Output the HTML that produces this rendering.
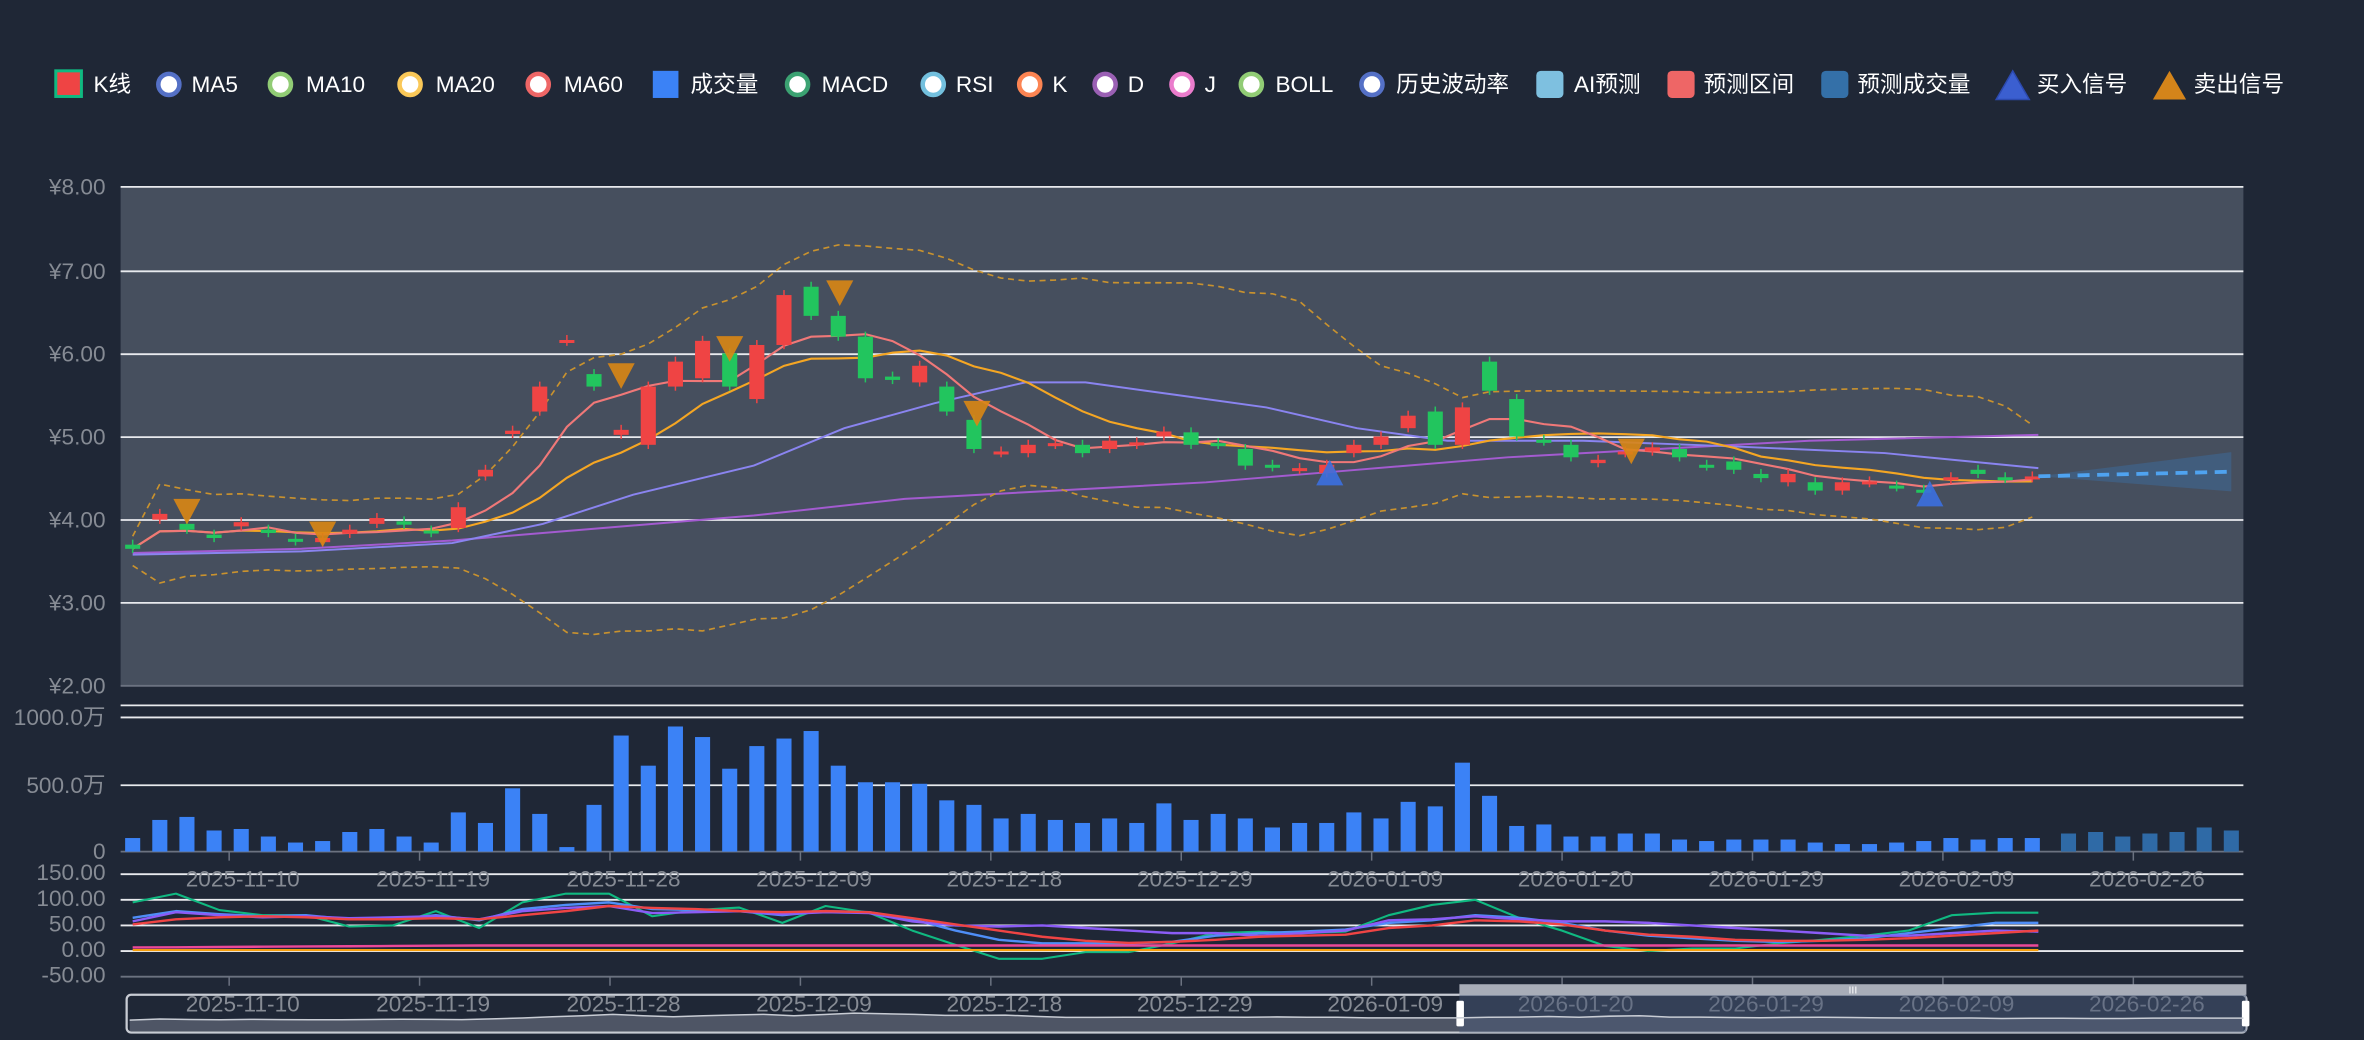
<!DOCTYPE html>
<html><head><meta charset="utf-8"><style>
html,body{margin:0;padding:0;background:#1f2736;}
svg{display:block;font-family:"Liberation Sans","Noto Sans CJK SC",sans-serif;}
</style></head><body>
<svg id="s" width="2364" height="1040" viewBox="0 0 1568 690" preserveAspectRatio="none" xmlns="http://www.w3.org/2000/svg">
<rect width="1568" height="690" fill="#1f2736"/>
<g font-size="15" fill="#ffffff">
<rect x="37" y="47" width="17" height="17" fill="#ef4444" stroke="#10b981" stroke-width="2"/><text x="62" y="61">K线</text>
<circle cx="112" cy="56" r="7" fill="#fff" stroke="#5470c6" stroke-width="3"/><text x="127" y="61">MA5</text>
<circle cx="186" cy="56" r="7" fill="#fff" stroke="#91cc75" stroke-width="3"/><text x="203" y="61">MA10</text>
<circle cx="272" cy="56" r="7" fill="#fff" stroke="#fac858" stroke-width="3"/><text x="289" y="61">MA20</text>
<circle cx="357" cy="56" r="7" fill="#fff" stroke="#ee6666" stroke-width="3"/><text x="374" y="61">MA60</text>
<rect x="433" y="47" width="17" height="18" fill="#3b82f6"/><text x="458" y="61">成交量</text>
<circle cx="529" cy="56" r="7" fill="#fff" stroke="#3ba272" stroke-width="3"/><text x="545" y="61">MACD</text>
<circle cx="619" cy="56" r="7" fill="#fff" stroke="#73c0de" stroke-width="3"/><text x="634" y="61">RSI</text>
<circle cx="683" cy="56" r="7" fill="#fff" stroke="#fc8452" stroke-width="3"/><text x="698" y="61">K</text>
<circle cx="733" cy="56" r="7" fill="#fff" stroke="#9a60b4" stroke-width="3"/><text x="748" y="61">D</text>
<circle cx="784" cy="56" r="7" fill="#fff" stroke="#ea7ccc" stroke-width="3"/><text x="799" y="61">J</text>
<circle cx="830" cy="56" r="7" fill="#fff" stroke="#91cc75" stroke-width="3"/><text x="846" y="61">BOLL</text>
<circle cx="910" cy="56" r="7" fill="#fff" stroke="#5470c6" stroke-width="3"/><text x="926" y="61">历史波动率</text>
<rect x="1019" y="47" width="18" height="18" rx="3" fill="#7ec0e0"/><text x="1044" y="61">AI预测</text>
<rect x="1106" y="47" width="18" height="18" rx="3" fill="#ee6666"/><text x="1130" y="61">预测区间</text>
<rect x="1208" y="47" width="18" height="18" rx="3" fill="#3470a8"/><text x="1232" y="61">预测成交量</text>
<polygon points="1335,47 1346,66 1324,66" fill="#3b5fd0" stroke="#2c4ab0"/><text x="1351" y="61">买入信号</text>
<polygon points="1439,47 1450,66 1428,66" fill="#d4841a"/><text x="1455" y="61">卖出信号</text>
</g>
<rect x="80" y="124" width="1408" height="331" fill="#464f5e"/>
<g stroke="#e8eaee" stroke-width="1.2">
<line x1="80" x2="1488" y1="124" y2="124"/><line x1="80" x2="1488" y1="180" y2="180"/><line x1="80" x2="1488" y1="235" y2="235"/><line x1="80" x2="1488" y1="290" y2="290"/><line x1="80" x2="1488" y1="345" y2="345"/><line x1="80" x2="1488" y1="400" y2="400"/>
<line x1="80" x2="1488" y1="468" y2="468"/><line x1="80" x2="1488" y1="476" y2="476"/><line x1="80" x2="1488" y1="521" y2="521"/>
<line x1="80" x2="1488" y1="580" y2="580"/><line x1="80" x2="1488" y1="597" y2="597"/><line x1="80" x2="1488" y1="614" y2="614"/><line x1="80" x2="1488" y1="631" y2="631"/>
</g>
<g stroke="#6b7280" stroke-width="1.2"><line x1="80" x2="1488" y1="455" y2="455"/><line x1="80" x2="1488" y1="565" y2="565"/><line x1="80" x2="1488" y1="648" y2="648"/></g>
<g font-size="15" fill="#868b94" text-anchor="end">
<text x="70" y="129">¥8.00</text><text x="70" y="185">¥7.00</text><text x="70" y="240">¥6.00</text><text x="70" y="295">¥5.00</text><text x="70" y="350">¥4.00</text><text x="70" y="405">¥3.00</text><text x="70" y="460">¥2.00</text>
<text x="70" y="481">1000.0万</text><text x="70" y="526">500.0万</text><text x="70" y="570">0</text>
<text x="70" y="584">150.00</text><text x="70" y="601">100.00</text><text x="70" y="618">50.00</text><text x="70" y="635">0.00</text><text x="70" y="652">-50.00</text>
</g>
<g id="ticks" stroke="#6b7280"></g>
<g id="xl" font-size="15" fill="#868b94" text-anchor="middle"></g>
<g id="vol"></g><g id="lines"></g><g id="cand"></g><g id="ind"></g>
<polygon points="1352,316 1480,300 1480,326" fill="#3b6ea5" opacity="0.45"/>
<line x1="1352" y1="316" x2="1478" y2="313" stroke="#4fa3f0" stroke-width="2.5" stroke-dasharray="8,5"/>
<polygon id="dzf" fill="#5a6272" opacity="0.8"/>
<rect x="84" y="660" width="1406" height="25" rx="3" fill="none" stroke="#c8ccd4" stroke-width="1.5"/>
<rect x="968" y="660" width="522" height="25" fill="#4a5a78" opacity="0.5"/>
<rect x="968" y="653" width="522" height="7" fill="#a8adb8"/>
<text x="1229" y="659" font-size="7" fill="#fff" text-anchor="middle">III</text>
<rect x="966" y="664" width="5" height="17" rx="1" fill="#fff"/><rect x="1487" y="664" width="5" height="17" rx="1" fill="#fff"/>
<polyline id="dz" fill="none" stroke="#c8ccd4" stroke-width="1"/>
</svg>
<script>
var NS="http://www.w3.org/2000/svg";
function el(p,t,a){var e=document.createElementNS(NS,t);for(var k in a)e.setAttribute(k,a[k]);document.getElementById(p).appendChild(e);return e;}
var oc=[[3.7,3.65],[4.0,4.07],[3.95,3.88],[3.82,3.78],[3.92,3.97],[3.88,3.84],[3.77,3.74],[3.73,3.78],[3.83,3.88],[3.95,4.02],[3.98,3.94],[3.87,3.84],[3.9,4.15],[4.52,4.6],[5.03,5.07],[5.3,5.6],[6.14,6.16],[5.75,5.6],[5.02,5.08],[4.9,5.6],[5.6,5.9],[5.7,6.15],[6.0,5.6],[5.45,6.1],[6.1,6.7],[6.8,6.45],[6.45,6.2],[6.2,5.7],[5.72,5.68],[5.65,5.85],[5.6,5.3],[5.2,4.85],[4.8,4.82],[4.8,4.9],[4.9,4.92],[4.9,4.8],[4.85,4.95],[4.9,4.93],[5.0,5.06],[5.05,4.9],[4.92,4.9],[4.85,4.65],[4.66,4.63],[4.6,4.62],[4.56,4.66],[4.8,4.9],[4.9,5.0],[5.1,5.25],[5.3,4.9],[4.9,5.35],[5.9,5.55],[5.45,5.0],[4.96,4.94],[4.9,4.75],[4.68,4.72],[4.8,4.82],[4.82,4.87],[4.85,4.75],[4.66,4.64],[4.7,4.6],[4.55,4.5],[4.45,4.55],[4.45,4.35],[4.35,4.45],[4.44,4.46],[4.41,4.39],[4.36,4.34],[4.48,4.51],[4.6,4.55],[4.51,4.49],[4.5,4.52]];
function Y(p){return 124+(8-p)*55.2;}
var N=oc.length,X=function(i){return 88+i*18;};
var vt=[556,544,542,551,550,555,559,558,552,550,555,559,539,546,523,540,562,534,488,508,482,489,510,495,490,485,508,519,519,520,531,534,543,540,544,546,543,546,533,544,540,543,549,546,546,539,543,532,535,506,528,548,547,555,555,553,553,557,558,557,557,557,559,560,560,559,558,556,557,556,556];
for(var i=0;i<N;i++){el("vol","rect",{x:X(i)-5,y:vt[i],width:10,height:565-vt[i],fill:"#3b82f6"});}
[1372,1390,1408,1426,1444,1462,1480].forEach(function(x,j){var t=[553,552,555,553,552,549,551][j];el("vol","rect",{x:x-5,y:t,width:10,height:565-t,fill:"#2f6aa6"});});
var c=oc.map(function(a){return a[1];});
function ma(n){return c.map(function(_,i){var s=0,k=0;for(var j=Math.max(0,i-n+1);j<=i;j++){s+=c[j];k++;}return s/k;});}
function sd(n,m){return c.map(function(_,i){var s=0,k=0;for(var j=Math.max(0,i-n+1);j<=i;j++){s+=(c[j]-m[i])*(c[j]-m[i]);k++;}return Math.sqrt(s/k);});}
function pl(arr,col,w,dash){var p=arr.map(function(v,i){return X(i)+","+Y(v).toFixed(1);}).join(" ");var a={points:p,fill:"none",stroke:col,"stroke-width":w};if(dash)a["stroke-dasharray"]=dash;el("lines","polyline",a);}
function pts(list,col,w){el("lines","polyline",{points:list.map(function(q){return q[0]+","+Y(q[1]).toFixed(1);}).join(" "),fill:"none",stroke:col,"stroke-width":w});}
var m5=ma(5),m10=ma(10),m20=ma(20),s20=sd(20,m20);
pts([[88,3.6],[200,3.65],[300,3.75],[400,3.9],[500,4.05],[600,4.25],[700,4.35],[800,4.45],[900,4.6],[1000,4.75],[1100,4.85],[1200,4.95],[1352,5.02]],"#a35bd0",1.3);
pts([[88,3.58],[200,3.62],[300,3.72],[360,3.95],[420,4.3],[500,4.65],[560,5.1],[620,5.4],[680,5.65],[720,5.65],[780,5.5],[840,5.35],[900,5.1],[960,4.95],[1050,4.95],[1150,4.88],[1250,4.8],[1352,4.62]],"#8a84f0",1.3);
pl(m20.map(function(v,i){return v+2*s20[i]+0.15;}),"#c9922e",1.1,"4,3");
pl(m20.map(function(v,i){return v-2*s20[i]-0.2;}),"#c9922e",1.1,"4,3");
pl(m10,"#f5a623",1.4);
pl(m5,"#f07878",1.4);
for(var i=0;i<N;i++){var o=oc[i][0],cl=oc[i][1],up=cl>=o,col=up?"#ef4444":"#22c55e";var hi=Math.max(o,cl)+0.06,lo=Math.min(o,cl)-0.05;
el("cand","line",{x1:X(i),x2:X(i),y1:Y(hi),y2:Y(lo),stroke:col,"stroke-width":1});
var t=Y(Math.max(o,cl)),h=Math.max(2,Math.abs(Y(o)-Y(cl)));el("cand","rect",{x:X(i)-5,y:t,width:10,height:h,fill:col});}
[[124,340],[214,355],[412,250],[484,232],[557,195],[648,275],[1082,300]].forEach(function(p){el("cand","polygon",{points:(p[0]-9)+","+(p[1]-9)+" "+(p[0]+9)+","+(p[1]-9)+" "+p[0]+","+(p[1]+8),fill:"#d98614",opacity:"0.9"});});
[[882,314],[1280,328]].forEach(function(p){el("cand","polygon",{points:(p[0]-9)+","+(p[1]+8)+" "+(p[0]+9)+","+(p[1]+8)+" "+p[0]+","+(p[1]-9),fill:"#3b6fe0",opacity:"0.9"});});
var labs=["2025-11-10","2025-11-19","2025-11-28","2025-12-09","2025-12-18","2025-12-29","2026-01-09","2026-01-20","2026-01-29","2026-02-09","2026-02-26"];
labs.forEach(function(l,j){var x=152+j*126.3;el("ticks","line",{x1:x,x2:x,y1:565,y2:571});el("ticks","line",{x1:x,x2:x,y1:648,y2:654});
var t=el("xl","text",{x:x+9,y:588});t.textContent=l;var t2=el("xl","text",{x:x+9,y:671});t2.textContent=l;});
function iy(v){return 631-v*0.34;}
function cur(vals,col,w){var n=vals.length,p="";for(var i=0;i<n;i++){var x=88+i*(1264/(n-1));p+=(i?"L":"M")+x.toFixed(1)+","+iy(vals[i]).toFixed(1);}el("ind","path",{d:p,fill:"none",stroke:col,"stroke-width":w,"stroke-linejoin":"round"});}
cur([95,112,80,70,70,48,50,78,45,95,112,112,68,80,85,55,88,75,40,12,-15,-15,-2,-2,15,35,38,35,38,70,90,100,65,40,10,0,5,5,15,22,30,40,70,75,75],"#10b981",1.4);
cur([65,78,72,68,70,62,62,70,60,82,90,95,82,80,78,70,78,76,62,40,22,15,15,15,18,30,35,38,42,55,60,70,65,55,40,30,25,20,18,20,25,35,45,55,55],"#4f8ef7",1.6);
cur([58,76,70,66,68,64,66,68,62,78,84,88,74,76,78,72,76,74,58,50,48,50,45,40,35,35,30,35,40,60,62,68,62,58,58,55,50,45,40,35,30,30,35,40,38],"#8b5cf6",1.6);
cur([52,62,66,68,66,62,62,64,62,70,78,88,84,82,78,76,78,76,64,52,40,28,20,16,18,22,28,30,32,45,50,60,58,52,40,32,28,22,20,20,22,25,30,35,40],"#ef4444",1.6);
cur([7,7.5,8,8.5,9,9.5,10,10.5,11,11,11,11,11,11,11,11,11,11,11,11,11,11,11,11,11,11,11,11,11,11,11,11,11,11,11,11,11,11,11,11,11,11,11,11,11],"#ec4899",1.6);
cur([2,2,2,2,2,2,2,2,2,2,2,2,2,2,2,2,2,2,2,2,2,2,2,2,2,2,2,2,2,2,2,2,2,2,2,2,2,2,2,2,2,2,2,2,2],"#f59e0b",1.4);
var dz=[];for(var i=0;i<N;i++){dz.push((86+i*(1402/(N-1))).toFixed(1)+","+(677-(c[i]-3.5)*1.5).toFixed(1));}
document.getElementById("dz").setAttribute("points",dz.join(" "));
document.getElementById("dzf").setAttribute("points","86,684 "+dz.join(" ")+" 1488,684");
</script>
</body></html>
